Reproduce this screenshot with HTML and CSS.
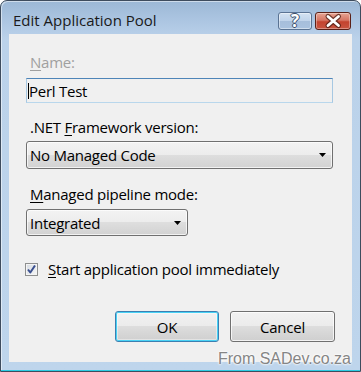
FILE: index.html
```html
<!DOCTYPE html>
<html lang="en">
<head>
    <meta charset="UTF-8">
    <meta name="viewport" content="width=device-width, initial-scale=1.0">
    <title>Edit Application Pool</title>
    <link rel="stylesheet" href="styles.css">
</head>
<body>
    <div class="window">
        <!-- Title Bar -->
        <div class="titlebar">
            <span class="title">Edit Application Pool</span>
            <div class="caption-buttons">
                <button class="caption-btn help-btn">?</button>
                <button class="caption-btn close-btn">
                    <svg width="36" height="18" viewBox="0 0 36 18">
                        <path d="M13 4.5 L23.5 13.5 M23.5 4.5 L13 13.5" stroke="#4a1b12" stroke-width="5" stroke-linecap="round" opacity="0.75"/>
                        <path d="M13 4.5 L23.5 13.5 M23.5 4.5 L13 13.5" stroke="#ffffff" stroke-width="2.8" stroke-linecap="round"/>
                    </svg>
                </button>
            </div>
        </div>

        <!-- Client Area -->
        <div class="client">
            <label class="field-label disabled"><u>N</u>ame:</label>
            <div class="textbox"><span class="caret"></span>Perl Test</div>

            <label class="field-label label-net">.NET <u>F</u>ramework version:</label>
            <div class="combo combo-wide">
                <span>No Managed Code</span>
                <svg class="arrow" width="7" height="4" viewBox="0 0 7 4"><path d="M0 0 H7 L3.5 4 Z" fill="#000"/></svg>
            </div>

            <label class="field-label label-mode"><u>M</u>anaged pipeline mode:</label>
            <div class="combo combo-small">
                <span>Integrated</span>
                <svg class="arrow" width="7" height="4" viewBox="0 0 7 4"><path d="M0 0 H7 L3.5 4 Z" fill="#000"/></svg>
            </div>

            <div class="check-row">
                <span class="checkbox">
                    <svg width="11" height="11" viewBox="0 0 11 11">
                        <path d="M2 5.5 L4.3 8.5 L9 1.5" stroke="#3a4f8f" stroke-width="2" fill="none" stroke-linejoin="round"/>
                    </svg>
                </span>
                <span><u>S</u>tart application pool immediately</span>
            </div>

            <div class="dialog-buttons">
                <button class="btn btn-default">OK</button>
                <button class="btn">Cancel</button>
            </div>
        </div>

        <div class="watermark">From SADev.co.za</div>
    </div>
</body>
</html>
```

FILE: styles.css
```css
/* General Styling */
body {
    margin: 0;
    padding: 0;
    background-color: #ffffff;
    font-family: 'Open Sans', 'Noto Sans', sans-serif;
    font-size: 15px;
    color: #000;
}

u {
    text-decoration: underline;
    text-underline-offset: 2px;
}

/* Window Frame */
.window {
    position: relative;
    width: 361px;
    height: 372px;
    box-sizing: border-box;
    border: 1px solid #3e4c5e;
    border-radius: 7px 7px 0 0;
    background: linear-gradient(#9cb8d6 0, #aec7e3 22px, #bbd2ea 38px, #bed5ec 100%);
    box-shadow: inset 0 -1px 0 #2ccbe2, inset 1px 1px 0 rgba(255, 255, 255, 0.5);
    display: flex;
    flex-direction: column;
}

/* Title Bar */
.titlebar {
    height: 33px;
    display: flex;
    justify-content: space-between;
    align-items: flex-start;
    padding: 0 9px 0 12px;
}

.title {
    padding-top: 9px;
    line-height: 20px;
    color: #1a1a1a;
}

.caption-buttons {
    display: flex;
    gap: 3px;
    margin-top: 11px;
}

.caption-btn {
    height: 18px;
    padding: 0;
    border-radius: 3px;
    box-sizing: border-box;
}

.help-btn {
    width: 34px;
    border: 1px solid #5a7393;
    background: linear-gradient(#d3e2f2 0%, #bfd3ea 50%, #a6bedb 50%, #a9c2df 100%);
    box-shadow: inset 0 0 0 1px rgba(255, 255, 255, 0.45);
    color: #ffffff;
    font-family: 'Open Sans', sans-serif;
    font-weight: bold;
    font-size: 17px;
    line-height: 14px;
    text-shadow: 1px 0 0 #3a4f6c, -1px 0 0 #3a4f6c, 0 1px 0 #3a4f6c, 0 -1px 0 #3a4f6c;
}

.close-btn {
    width: 36px;
    border: 1px solid #5b2017;
    background: linear-gradient(#e7a493 0%, #d67664 45%, #c3432f 55%, #c95540 100%);
    box-shadow: inset 0 0 0 1px rgba(255, 255, 255, 0.35);
    position: relative;
}

.close-btn svg {
    position: absolute;
    top: -1px;
    left: -1px;
}

/* Client Area */
.client {
    margin: 0 8px 0 8px;
    height: 328px;
    box-sizing: border-box;
    background-color: #f0f0f0;
    padding: 18px 19px 0 17px;
    display: flex;
    flex-direction: column;
    align-items: flex-start;
    letter-spacing: -0.25px;
}

.field-label {
    line-height: 20px;
    padding-left: 4px;
}

.field-label.disabled {
    color: #a0a0a0;
}

.label-net {
    margin-top: 14px;
}

.label-mode {
    margin-top: 15px;
}

/* Text Box */
.textbox {
    margin-top: 6px;
    width: 307px;
    height: 25px;
    box-sizing: border-box;
    border: 1px solid #a7c8e2;
    border-top-color: #4f85b8;
    border-bottom-color: #b9d7ec;
    display: flex;
    align-items: center;
    padding-left: 1px;
    line-height: 20px;
}

.caret {
    width: 1px;
    height: 16px;
    background-color: #000;
}

/* Combo Boxes */
.combo {
    box-sizing: border-box;
    border: 1px solid #707070;
    border-radius: 3px;
    background: linear-gradient(#f3f3f3 0%, #ececec 50%, #dedede 50%, #d2d2d2 100%);
    box-shadow: inset 0 0 0 1px rgba(255, 255, 255, 0.7);
    display: flex;
    justify-content: space-between;
    align-items: center;
    padding: 0 6px 0 3px;
    line-height: 20px;
}

.combo-wide {
    margin-top: 4px;
    width: 307px;
    height: 28px;
}

.combo-small {
    margin-top: 5px;
    width: 162px;
    height: 27px;
}

/* Checkbox */
.check-row {
    margin-top: 23px;
    margin-left: -1px;
    display: flex;
    align-items: center;
    gap: 10px;
    line-height: 20px;
}

.checkbox {
    width: 13px;
    height: 13px;
    box-sizing: border-box;
    border: 1px solid #8e8f8f;
    background: linear-gradient(135deg, #d6dbe2, #f7f7f7);
    box-shadow: inset 0 0 0 1px #f4f4f4;
    display: flex;
    align-items: center;
    justify-content: center;
}

/* Dialog Buttons */
.dialog-buttons {
    margin-top: 32px;
    align-self: stretch;
    display: flex;
    justify-content: flex-end;
    gap: 11px;
    margin-right: -2px;
}

.btn {
    width: 105px;
    height: 31px;
    box-sizing: border-box;
    border: 1px solid #707070;
    border-radius: 3px;
    background: linear-gradient(#f2f2f2 0%, #ebebeb 50%, #dddddd 50%, #cfcfcf 100%);
    box-shadow: inset 0 0 0 1px rgba(255, 255, 255, 0.75);
    font-family: 'Open Sans', 'Noto Sans', sans-serif;
    font-size: 15px;
    letter-spacing: -0.25px;
    color: #000;
    padding: 0;
}

.btn-default {
    width: 104px;
    border-color: #3c7fb1;
    box-shadow: inset 0 0 0 1px #48d2f5, inset 0 0 0 2px rgba(255, 255, 255, 0.4);
}

/* Watermark overlay */
.watermark {
    position: absolute;
    right: 9px;
    bottom: 3px;
    font-family: 'Liberation Sans', Arial, sans-serif;
    font-size: 16px;
    color: #858585;
    text-shadow: 0 0 2px #fff, 0 0 2px #fff, 0 0 3px #fff;
}
```
